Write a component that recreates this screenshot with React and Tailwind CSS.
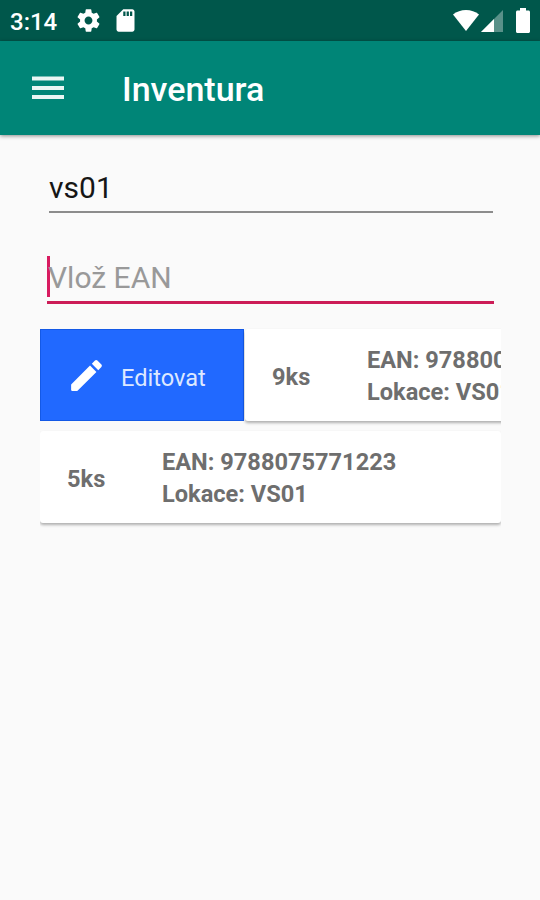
const items = [
  { id: 1, count: '9ks', ean: '978800', location: 'VS01', open: true },
  { id: 2, count: '5ks', ean: '9788075771223', location: 'VS01', open: false },
]

function StatusBar() {
  return (
    <div className="h-[41px] bg-[#00574b] flex items-center justify-between pl-[10px] pr-[10px] text-white">
      <div className="flex items-center">
        <span className="w-[65px] text-[24px] leading-none font-medium pt-[2px]">3:14</span>
        <svg className="w-[27px] h-[27px]" viewBox="0 0 24 24" fill="currentColor">
          <path d="M19.43 12.98c.04-.32.07-.64.07-.98s-.03-.66-.07-.98l2.11-1.65c.19-.15.24-.42.12-.64l-2-3.46c-.12-.22-.39-.3-.61-.22l-2.49 1c-.52-.4-1.08-.73-1.69-.98l-.38-2.65C14.46 2.18 14.25 2 14 2h-4c-.25 0-.46.18-.49.42l-.38 2.65c-.61.25-1.17.59-1.69.98l-2.49-1c-.23-.09-.49 0-.61.22l-2 3.46c-.13.22-.07.49.12.64l2.11 1.65c-.04.32-.07.65-.07.98s.03.66.07.98l-2.11 1.65c-.19.15-.24.42-.12.64l2 3.46c.12.22.39.3.61.22l2.49-1c.52.4 1.08.73 1.69.98l.38 2.65c.03.24.24.42.49.42h4c.25 0 .46-.18.49-.42l.38-2.65c.61-.25 1.17-.59 1.69-.98l2.49 1c.23.09.49 0 .61-.22l2-3.46c.12-.22.07-.49-.12-.64l-2.11-1.65zM12 15.5c-1.93 0-3.5-1.57-3.5-3.5s1.57-3.5 3.5-3.5 3.5 1.57 3.5 3.5-1.57 3.5-3.5 3.5z" />
        </svg>
        <svg className="w-[27px] h-[27px] ml-[10px]" viewBox="0 0 24 24" fill="currentColor">
          <path d="M18 2h-8L4.02 8 4 20c0 1.100.9 2 2 2h12c1.100 0 2-.9 2-2V4c0-1.100-.9-2-2-2zm-6 6h-2V4h2v4zm3 0h-2V4h2v4zm3 0h-2V4h2v4z" />
        </svg>
      </div>
      <div className="flex items-center">
        <svg className="w-[28px] h-[24px]" viewBox="0 0 28 24" fill="currentColor">
          <path d="M1 5.500C8 -.5 20 -.5 27 5.500L14 22z" />
        </svg>
        <svg className="w-[22px] h-[22px] ml-[1px]" viewBox="0 0 22 22" fill="currentColor">
          <path d="M22 0v22H0z" fillOpacity="0.35" />
          <path d="M13 9v13H0z" />
        </svg>
        <svg className="w-[14px] h-[25px] ml-[13px] -mt-px" viewBox="0 0 14 25" fill="currentColor">
          <path d="M4 0h6v2.500h2.500c.8 0 1.500.7 1.500 1.500v19.500c0 .8-.7 1.500-1.500 1.500h-11C.7 25 0 24.300 0 23.500V4c0-.8.7-1.500 1.500-1.500H4z" />
        </svg>
      </div>
    </div>
  )
}

function Toolbar() {
  return (
    <div className="h-[94px] bg-[#008577] flex items-center pl-8 text-white shadow-[0_1px_4px_rgba(0,0,0,0.45)]">
      <svg className="w-8 h-6" viewBox="0 0 32 24" fill="#e9f6f4">
        <path d="M0 .5h32v4H0zM0 10h32v4H0zM0 19h32v4H0z" />
      </svg>
      <h1 className="ml-[58px] pt-[1px] text-[34px] leading-none font-medium">Inventura</h1>
    </div>
  )
}

function EditButton() {
  return (
    <button className="w-[204px] h-[92px] shrink-0 bg-[#2169ff] border border-[#1459e6] flex items-center pl-[25px] text-[#dde8ff]">
      <svg className="w-[41px] h-[41px]" viewBox="0 0 24 24" fill="#fff">
        <path d="M3 17.460v3.040c0 .28.22.5.5.5h3.040c.13 0 .26-.05.35-.15L17.810 9.940l-3.750-3.750L3.150 17.100c-.1.100-.15.220-.15.360zM20.710 7.040c.39-.39.39-1.020 0-1.410l-2.340-2.340c-.39-.39-1.020-.39-1.410 0l-1.830 1.830 3.750 3.750 1.830-1.830z" />
      </svg>
      <span className="ml-[14px] text-[23.600px] leading-none pt-[8px]">Editovat</span>
    </button>
  )
}

function ItemCard({ item }) {
  return (
    <div className="w-[461px] h-[92px] shrink-0 bg-white rounded-[3px] shadow-[0_2px_3px_rgba(0,0,0,0.3)] flex items-center pl-[27px] text-[23.600px] font-bold text-[#6e6e6e]">
      <span className="w-[95px] pt-[5px]">{item.count}</span>
      <div className="pt-[2px] leading-[32.500px] whitespace-nowrap">
        <p>EAN: {item.ean}</p>
        <p>Lokace: {item.location}</p>
      </div>
    </div>
  )
}

export default function App() {
  return (
    <div className="w-[540px] h-[900px] bg-[#fafafa] overflow-hidden font-[Roboto,sans-serif]">
      <StatusBar />
      <Toolbar />
      <div className="pl-[49px] pr-[47px] pt-[32px]">
        <div className="h-[46px] border-b-2 border-[#8c8c8c] text-[30px] leading-[42px] text-[#161616]">vs01</div>
      </div>
      <div className="pl-[47px] pr-[46px] pt-[43px]">
        <div className="h-[48px] border-b-3 border-[#cc1c57] text-[#999]">
          <div className="h-[41px] border-l-[3px] border-[#d81b60] text-[30px] leading-[43px]">
            <span className="-ml-[2px]">Vlož EAN</span>
          </div>
        </div>
      </div>
      <div className="ml-[40px] mt-[17px] w-[461px] overflow-hidden flex flex-col pt-[8px] pb-3 gap-[10px]">
        {items.map((item) => (
          <div key={item.id} className="flex gap-px">
            {item.open && <EditButton />}
            <ItemCard item={item} />
          </div>
        ))}
      </div>
    </div>
  )
}
